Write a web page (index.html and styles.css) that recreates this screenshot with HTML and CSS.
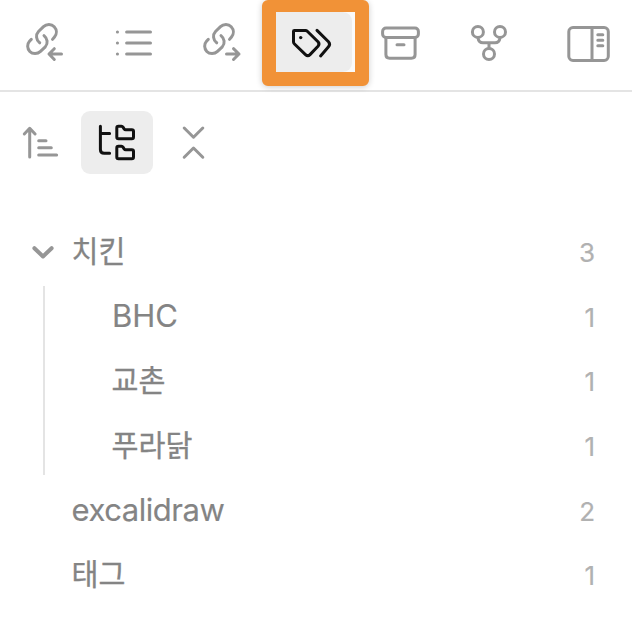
FILE: index.html
```html
<!DOCTYPE html>
<html lang="ko">
<head>
<meta charset="utf-8">
<title>Tags</title>
<link rel="stylesheet" href="styles.css">
</head>
<body>
<header class="tabs">
  <svg class="icon tab-in" viewBox="22 18 44 50"><path d="M39.7 42.8C36 40 35.5 34.7 38.5 31.5L43.5 26.7C46.5 23.8 51.5 23.8 54.2 26.7C57 29.7 57 34 54.5 37L52.5 39.4M44 35.7C47.5 38.5 48.3 43.5 45.3 46.8L40.5 51.4C37.5 54.3 32.5 54.3 29.8 51.4C27 48.5 27 44 29.5 41.2L31.3 39.4M61.5 54H49.3M54.3 48.7L49 54L54.3 59.5"/></svg>
  <svg class="icon tab-list" viewBox="112 18 44 50"><path d="M117.4 32h.1M117.4 43h.1M117.4 54h.1M126.6 32H150.5M126.6 43H150.5M126.6 54H150.5"/></svg>
  <svg class="icon tab-out" viewBox="22 18 44 50"><path d="M39.7 42.8C36 40 35.5 34.7 38.5 31.5L43.5 26.7C46.5 23.8 51.5 23.8 54.2 26.7C57 29.7 57 34 54.5 37L52.5 39.4M44 35.7C47.5 38.5 48.3 43.5 45.3 46.8L40.5 51.4C37.5 54.3 32.5 54.3 29.8 51.4C27 48.5 27 44 29.5 41.2L31.3 39.4M49.5 54H62M56.5 48.7L62 54L56.5 59.5"/></svg>
  <div class="marker">
    <div class="tab-active"><svg class="icon dark" viewBox="289 18 44 50"><path d="M293.5 31.3Q293.5 30.4 294.4 30.4H305.5Q306.5 30.4 307.3 31.2L318 41.8Q320 44 318 46.3L310 54.6Q307.8 56.8 305.5 54.6L294.5 44Q293.5 43 293.5 42ZM317 30.4L328.5 41.8Q330.7 44.2 328.5 46.7L320.6 55.9"/><circle class="dot" cx="300.7" cy="37.6" r="1.7"/></svg></div>
  </div>
  <svg class="icon tab-archive" viewBox="378 18 44 50"><rect x="382.6" y="28" width="35.8" height="9.4" rx="3.4"/><path d="M385.9 38V54.5Q385.9 58.2 389.6 58.2H411.4Q415.1 58.2 415.1 54.5V38M397 44.7H404"/></svg>
  <svg class="icon tab-graph" viewBox="467 18 44 50"><circle cx="477.9" cy="31.9" r="5.5"/><circle cx="500" cy="31.9" r="5.5"/><circle cx="489" cy="54" r="5.5"/><path d="M478 38Q478.7 42.8 483 42.8H495Q499.3 42.8 500 38M489 43V48"/></svg>
  <svg class="icon tab-panel" viewBox="566 18 44 50"><rect x="568.8" y="27.5" width="39.5" height="33" rx="4.2"/><path d="M592 28V60M597.8 34.8H602.8M597.8 40.3H602.8M597.8 45.8H602.8"/></svg>
</header>
<div class="actions">
  <svg class="icon sort" viewBox="20 118 44 50"><path d="M29.7 157V128.5M24.3 134L29.7 128.3L35.1 134M38.7 140.7H46M38.7 147.8H51.3M38.7 155.1H56.6"/></svg>
  <div class="tree-button"><svg class="icon dark" viewBox="95 118 44 50"><path d="M100.4 126.3V149.5Q100.4 153.3 104.2 153.3H109.6M100.4 133.4H109.6M116.8 127.9Q116.8 126.3 118.4 126.3H121.4Q122.4 126.3 123 127.2L124.1 128.8Q124.7 129.7 125.8 129.7H131.8Q133.5 129.7 133.5 131.4V137.1Q133.5 138.8 131.8 138.8H118.5Q116.8 138.8 116.8 137.1ZM116.8 147.9Q116.8 146.3 118.4 146.3H121.4Q122.4 146.3 123 147.2L124.1 148.8Q124.7 149.7 125.8 149.7H131.8Q133.5 149.7 133.5 151.4V157.1Q133.5 158.8 131.8 158.8H118.5Q116.8 158.8 116.8 157.1Z"/></svg></div>
  <svg class="icon collapse" viewBox="172 118 44 50"><path d="M184.2 128L193.5 137.2L202.8 128M184.2 157.2L193.5 148L202.8 157.2"/></svg>
</div>
<main class="tags">
  <div class="row"><svg class="chevron" viewBox="0 0 24 16"><path d="M3.4 4.2L12 12.5L20.6 4.2"/></svg><span class="name">치킨</span><span class="count">3</span></div>
  <div class="children">
    <div class="row"><span class="name latin">BHC</span><span class="count">1</span></div>
    <div class="row"><span class="name">교촌</span><span class="count">1</span></div>
    <div class="row"><span class="name">푸라닭</span><span class="count">1</span></div>
  </div>
  <div class="row"><span class="name latin word">excalidraw</span><span class="count">2</span></div>
  <div class="row"><span class="name">태그</span><span class="count">1</span></div>
</main>
</body>
</html>
```
FILE: styles.css
```css
* { box-sizing: border-box; }
body {
  margin: 0;
  background: #fff;
  color: #848484;
  font-family: Inter, "Noto Sans CJK KR", sans-serif;
}
.icon {
  display: block;
  flex: none;
  width: 44px;
  height: 50px;
  fill: none;
  stroke: #969696;
  stroke-width: 3;
  stroke-linecap: round;
  stroke-linejoin: round;
}
.dark { stroke: #111; }
.dot { fill: #111; stroke: none; }
.tabs {
  display: flex;
  align-items: flex-start;
  height: 92px;
  border-bottom: 2px solid #e4e4e4;
}
.tabs > .icon { margin-top: 18px; }
.tab-in { margin-left: 22px; }
.tab-list { margin-left: 46px; }
.tab-out { margin-left: 43px; }
.marker {
  flex: none;
  width: 107px;
  height: 86px;
  margin-left: 19px;
  border: 14px solid #f19237;
  border-top-width: 12px;
  border-radius: 6px;
  background: #fafafa;
  box-shadow: 0 1px 6px rgba(0, 0, 0, .2);
}
.tab-active {
  width: 76px;
  height: 60px;
  padding: 6px 0 0 13px;
  border-radius: 0 9px 9px 0;
  background: #ededed;
}
.tab-archive { margin-left: 9px; }
.tab-graph { margin-left: 45px; }
.tab-panel { margin-left: 55px; }
.actions {
  display: flex;
  align-items: flex-start;
  padding: 19px 0 0 20px;
  height: 127px;
}
.actions > .icon { margin-top: 7px; }
.tree-button {
  width: 72px;
  height: 63px;
  margin: 0 19px 0 17px;
  padding: 7px 14px;
  border-radius: 9px;
  background: #ededed;
}
.row {
  display: flex;
  align-items: center;
  height: 64.6px;
  padding: 0 37px 0 72px;
}
.chevron {
  width: 24px;
  height: 16px;
  margin: 1px 17px 0 -41px;
  fill: none;
  stroke: #969696;
  stroke-width: 4;
  stroke-linecap: round;
  stroke-linejoin: round;
}
.name {
  margin-left: -.4px;
  padding-top: 2px;
  font-size: 29.3px;
  line-height: 40px;
  white-space: nowrap;
  -webkit-text-stroke: .3px #848484;
}
.latin {
  margin-left: 0;
  padding-top: 0;
  font-size: 31px;
  -webkit-text-stroke-width: .15px;
}
.word {
  margin-left: -.5px;
  letter-spacing: -.45px;
}
.count {
  margin-left: auto;
  padding-top: 3px;
  color: #b1b1b1;
  font-size: 26px;
  -webkit-text-stroke: .2px #b1b1b1;
}
.children {
  padding-left: 40px;
  background: linear-gradient(#e4e4e4, #e4e4e4) 43px 2px / 2px 189px no-repeat;
}
```
